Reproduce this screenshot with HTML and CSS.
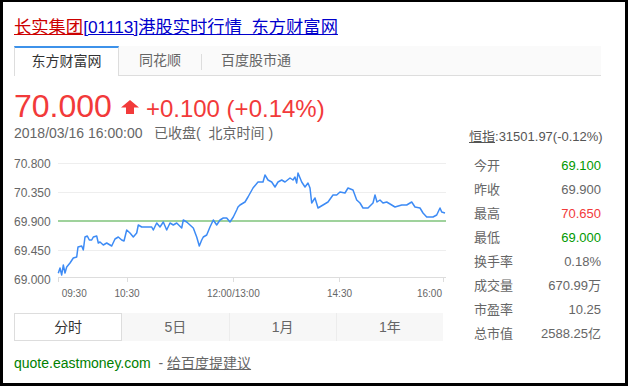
FILE: index.html
```html
<!DOCTYPE html>
<html lang="zh-CN">
<head>
    <meta charset="UTF-8">
    <title>长实集团[01113]港股实时行情</title>
    <link rel="stylesheet" href="styles.css">
</head>
<body>
<div class="page">
    <h1 class="title"><a class="visited" href="#">长实集团</a><a href="#">[01113]港股实时行情&nbsp; 东方财富网</a></h1>

    <div class="tabs">
        <div class="tab active">东方财富网</div>
        <div class="tab">同花顺</div>
        <div class="tab sep">百度股市通</div>
    </div>

    <div class="price"><span class="now">70.000</span><svg class="arrow" width="18" height="14" viewBox="0 0 18 14"><polygon points="9,0 18,7.5 13,7.5 13,14 5,14 5,7.5 0,7.5"/></svg><span class="change">+0.100 (+0.14%)</span></div>

    <div class="main">
        <div class="left">
            <div class="time">2018/03/16 16:00:00&nbsp;&nbsp;&nbsp;已收盘(&nbsp;&nbsp;北京时间&nbsp;)</div>

            <svg class="chart" width="432" height="154" viewBox="0 0 432 154">
                <g class="grid">
                    <line x1="44" y1="17.5" x2="432" y2="17.5"/>
                    <line x1="44" y1="46.5" x2="432" y2="46.5"/>
                    <line x1="44" y1="104.5" x2="432" y2="104.5"/>
                </g>
                <g class="axis">
                    <line x1="44" y1="131.5" x2="432" y2="131.5"/>
                    <line x1="44.5" y1="131.5" x2="44.5" y2="136"/>
                    <line x1="113.5" y1="131.5" x2="113.5" y2="136"/>
                    <line x1="219.5" y1="131.5" x2="219.5" y2="136"/>
                    <line x1="325.5" y1="131.5" x2="325.5" y2="136"/>
                    <line x1="429.5" y1="131.5" x2="429.5" y2="136"/>
                </g>
                <line class="close" x1="44" y1="75" x2="432" y2="75"/>
                <polyline class="line" points="44.3,127.3 46,122 47.7,129 49.3,119 51,127 52.7,121 56,117 59.3,112 62.7,111 64,101 67.7,100 69.3,104 71,91 73.3,90 75.3,94 77.7,94 79.3,91 82.7,90 84.3,97 86,96 89.3,99 92.7,97 97.7,100 101,93 104.3,91 107.7,94 110,95 112.7,84 116,87 119.3,91 122.7,87 124.3,79 127.7,81 131,81 137.7,81 139.3,84 142.7,77 146,81 149.3,76 152.7,84 156,77 159.3,79 162.7,77 167.7,82 169.3,74 172.7,76 176,79 179.3,82 182.7,91 185.3,100 187.7,94 189.3,91 192.7,89 196,81 199.3,74 202.7,79 206,74 209.3,72 212.7,72 216,76 219.3,71 222.7,64 224,61 226,59 231,56 234,51 239,42 244,36 249,36 251,29 254,34 257.7,36 261,41 264,36 267.7,34 271,36 276,32 279,34 281,31 282.7,37 284,27 287.7,36 291,41 294,37 296,42 297.7,57 301,52 304,62 309,59 314,56 319,49 322.7,49 326,46 331,47 334,42 339,44 342.7,54 346,57 349,62 354,62 359,57 361,49 363,56 366,54 369,57 372.7,56 377.7,59 381,61 387.7,59 392.7,59 397.7,56 401,61 406,62 409,67 412.7,71 419,71 422.7,69 426,62 427.7,66 431,67"/>
                <g class="ylabels">
                    <text x="0" y="21.5">70.800</text>
                    <text x="0" y="50.5">70.350</text>
                    <text x="0" y="79.5">69.900</text>
                    <text x="0" y="108.5">69.450</text>
                    <text x="0" y="138">69.000</text>
                </g>
                <g class="xlabels">
                    <text x="47.7" y="151.3">09:30</text>
                    <text x="113" y="151.3" text-anchor="middle">10:30</text>
                    <text x="219.3" y="151.3" text-anchor="middle">12:00/13:00</text>
                    <text x="325.5" y="151.3" text-anchor="middle">14:30</text>
                    <text x="428" y="151.3" text-anchor="end">16:00</text>
                </g>
            </svg>

            <div class="periods">
                <div class="period active">分时</div>
                <div class="period">5日</div>
                <div class="period sep">1月</div>
                <div class="period sep">1年</div>
            </div>
        </div>

        <div class="right">
            <div class="hsi"><a href="#">恒指</a>:31501.97(-0.12%)</div>
            <div class="stats">
                <div class="row"><span>今开</span><span class="down">69.100</span></div>
                <div class="row"><span>昨收</span><span>69.900</span></div>
                <div class="row"><span>最高</span><span class="up">70.650</span></div>
                <div class="row"><span>最低</span><span class="down">69.000</span></div>
                <div class="row"><span>换手率</span><span>0.18%</span></div>
                <div class="row"><span>成交量</span><span>670.99万</span></div>
                <div class="row"><span>市盈率</span><span>10.25</span></div>
                <div class="row"><span>总市值</span><span>2588.25亿</span></div>
            </div>
        </div>
    </div>

    <div class="footer">
        <span class="site">quote.eastmoney.com</span>&nbsp; - <a href="#">给百度提建议</a>
    </div>
</div>
</body>
</html>
```

FILE: styles.css
```css
html, body {
    margin: 0;
    padding: 0;
    background: #000;
}
body {
    font-family: "Liberation Sans", Arial, "Noto Sans CJK SC", sans-serif;
    color: #333;
}
.page {
    margin: 2px 3px 0 3px;
    height: 381px;
    box-sizing: border-box;
    padding: 15px 24px 0 11px;
    background: #fff;
    overflow: hidden;
}

.title {
    margin: 0;
    font-size: 17.3px;
    font-weight: normal;
    line-height: 20px;
    white-space: nowrap;
}
.title a {
    color: #0000cc;
}
.title a.visited {
    color: #cc0000;
}

.tabs {
    display: flex;
    height: 29px;
    margin-top: 9px;
    background: #fafafa;
    border-bottom: 1px solid #ddd;
}
.tab {
    position: relative;
    padding: 0 20px;
    font-size: 14px;
    line-height: 29px;
    color: #666;
}
.tab.active {
    width: 105px;
    box-sizing: border-box;
    padding: 0;
    height: 30px;
    margin-bottom: -1px;
    text-align: center;
    color: #333;
    background: #fff;
    border-top: 2px solid #3d92ea;
    border-left: 1px solid #ddd;
    border-right: 1px solid #ddd;
    line-height: 26px;
}
.tab.sep::before {
    content: "";
    position: absolute;
    left: 0;
    top: 8px;
    height: 16px;
    border-left: 1px solid #ddd;
}

.price {
    margin-top: 12px;
    font-size: 32px;
    line-height: 36px;
    color: #f23a3a;
    white-space: nowrap;
}
.arrow {
    fill: #f23a3a;
    margin: 0 7px 0 9px;
    vertical-align: 3px;
}
.change {
    font-size: 24px;
    line-height: 1;
}

.main {
    display: flex;
    justify-content: space-between;
}
.left {
    width: 432px;
}
.time {
    font-size: 14px;
    line-height: 18px;
    color: #666;
    white-space: nowrap;
}

.chart {
    display: block;
    margin-top: 4px;
}
.grid line {
    stroke: #eee;
    stroke-width: 1;
}
.axis line {
    stroke: #ddd;
    stroke-width: 1;
}
.close {
    stroke: #9fd29c;
    stroke-width: 2;
}
.line {
    fill: none;
    stroke: #3d8bf5;
    stroke-width: 1.5;
    stroke-linejoin: round;
}
.ylabels text {
    font-size: 12px;
    fill: #666;
}
.xlabels text {
    font-size: 10px;
    fill: #666;
}

.periods {
    display: flex;
    width: 429px;
    height: 28px;
    margin-top: 13px;
    background: #f7f7f7;
}
.period {
    flex: 1;
    box-sizing: border-box;
    text-align: center;
    font-size: 14px;
    line-height: 28px;
    color: #666;
}
.period.active {
    background: #fff;
    border: 1px solid #ddd;
    line-height: 26px;
    color: #333;
}
.period.sep {
    border-left: 1px solid #ececec;
}

.right {
    width: 132px;
    padding-top: 4px;
}
.hsi {
    font-size: 13px;
    line-height: 18px;
    text-align: right;
    color: #555;
    white-space: nowrap;
}
.hsi a {
    color: #555;
}
.stats {
    margin-top: 8px;
}
.row {
    display: flex;
    justify-content: space-between;
    padding-left: 5px;
    font-size: 13px;
    line-height: 24px;
    color: #666;
}
.up {
    color: #f23a3a;
}
.down {
    color: #009900;
}

.footer {
    margin-top: 7px;
    font-size: 14px;
    line-height: 20px;
    color: #666;
    white-space: nowrap;
}
.footer .site {
    color: #008000;
}
.footer a {
    color: #666;
}
```
